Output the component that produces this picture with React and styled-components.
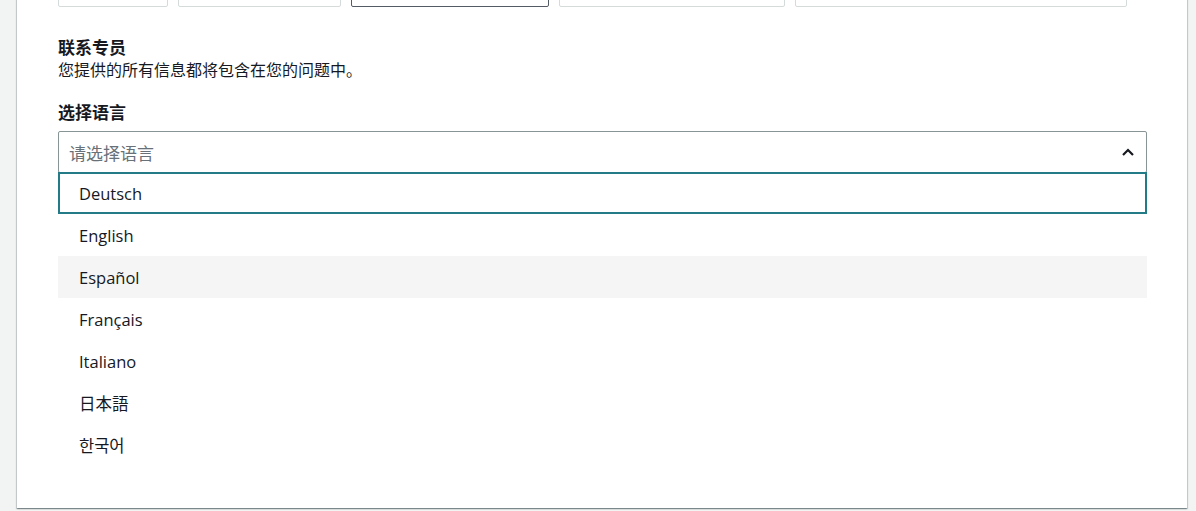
import React from "react";
import styled, { createGlobalStyle } from "styled-components";

const GlobalStyle = createGlobalStyle`
  html, body {
    margin: 0;
    padding: 0;
    background: #f2f3f3;
    font-family: "Open Sans", "Noto Sans", "Noto Sans CJK SC", sans-serif;
    color: #16191f;
    overflow: hidden;
  }
`;

const languages = [
  "Deutsch",
  "English",
  "Español",
  "Français",
  "Italiano",
  "日本語",
  "한국어",
];

const tiles = [
  { width: 110 },
  { width: 163 },
  { width: 198, selected: true },
  { width: 226 },
  { width: 332 },
];

const App = () => {
  return (
    <>
      <GlobalStyle />
      <Page>
        <Card>
          <TileRow>
            {tiles.map((t, i) => (
              <Tile key={i} $width={t.width} $selected={t.selected} />
            ))}
          </TileRow>
          <Section>
            <Heading>联系专员</Heading>
            <Description>您提供的所有信息都将包含在您的问题中。</Description>
          </Section>
          <Field>
            <Label>选择语言</Label>
            <SelectBox>
              <Placeholder>请选择语言</Placeholder>
              <Caret width="14" height="10" viewBox="0 0 14 10">
                <polyline
                  points="2,8 7,3 12,8"
                  fill="none"
                  stroke="#16191f"
                  strokeWidth="2.2"
                />
              </Caret>
            </SelectBox>
            <OptionList>
              {languages.map((lang, i) => (
                <Option key={lang} $focused={i === 0} $hovered={i === 2}>
                  {lang}
                </Option>
              ))}
            </OptionList>
          </Field>
        </Card>
      </Page>
    </>
  );
};

export default App;

const Page = styled.div`
  padding: 0 9px 3px 17px;
  margin-top: -33px;
`;

const Card = styled.div`
  background: #ffffff;
  box-shadow: 0 1px 1px 0 rgba(0, 28, 36, 0.3), 1px 1px 1px 0 rgba(0, 28, 36, 0.15),
    -1px 1px 1px 0 rgba(0, 28, 36, 0.15);
  padding: 0 40px 42px 41px;
`;

const TileRow = styled.div`
  display: flex;
  gap: 10px;
`;

const Tile = styled.div`
  width: ${(p) => p.$width}px;
  height: 40px;
  box-sizing: border-box;
  border: 1px solid ${(p) => (p.$selected ? "#545b64" : "#d5dbdb")};
  border-radius: 2px;
  background: #fff;
`;

const Section = styled.div`
  margin-top: 29px;
  display: flex;
  flex-direction: column;
`;

const Heading = styled.div`
  font-size: 17px;
  font-weight: 700;
  line-height: 22px;
  font-family: "Noto Sans CJK SC", sans-serif;
`;

const Description = styled.div`
  font-size: 16px;
  line-height: 22px;
  font-family: "Noto Sans CJK SC", sans-serif;
`;

const Field = styled.div`
  margin-top: 21px;
  display: flex;
  flex-direction: column;
`;

const Label = styled.div`
  font-size: 17px;
  font-weight: 700;
  line-height: 22px;
  margin-bottom: 8px;
  font-family: "Noto Sans CJK SC", sans-serif;
`;

const SelectBox = styled.div`
  height: 42px;
  box-sizing: border-box;
  border: 1px solid #879596;
  border-radius: 2px;
  display: flex;
  align-items: center;
  justify-content: space-between;
  padding: 0 11px 0 10px;
`;

const Placeholder = styled.span`
  font-size: 17px;
  color: #687078;
  font-family: "Noto Sans CJK SC", sans-serif;
`;

const Caret = styled.svg`
  display: block;
  margin-top: -1px;
`;

const OptionList = styled.ul`
  list-style: none;
  margin: -1px 0 0;
  padding: 0;
`;

const Option = styled.li`
  height: 42px;
  box-sizing: border-box;
  display: flex;
  align-items: center;
  padding: 0 20px 0 19px;
  font-size: 16.5px;
  font-family: "Open Sans", "Noto Sans CJK JP", "Noto Sans CJK KR", sans-serif;
  background: ${(p) => (p.$hovered ? "#f5f5f5" : "#fff")};
  border: 2px solid ${(p) => (p.$focused ? "#237b88" : "transparent")};
`;
